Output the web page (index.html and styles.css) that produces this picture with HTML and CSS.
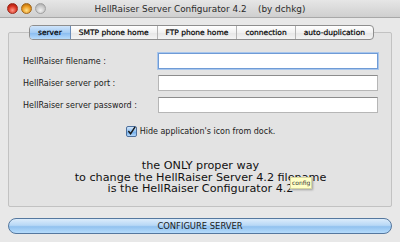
FILE: index.html
```html
<!DOCTYPE html>
<html>
<head>
  <meta charset="UTF-8">
  <title>HellRaiser Server Configurator 4.2</title>
  <link rel="stylesheet" href="styles.css">
</head>
<body>
  <div class="window">
    <!-- Title bar -->
    <div class="titlebar">
      <div class="lights">
        <span class="light red"></span>
        <span class="light orange"></span>
        <span class="light gray"></span>
      </div>
      <span class="title">HellRaiser Server Configurator 4.2&nbsp;&nbsp;&nbsp; (by dchkg)</span>
    </div>
    <div class="content">
      <!-- Tab group -->
      <div class="tabs">
        <span class="tab active">server</span>
        <span class="tab">SMTP phone home</span>
        <span class="tab">FTP phone home</span>
        <span class="tab">connection</span>
        <span class="tab">auto-duplication</span>
      </div>
      <div class="panel">
        <div class="form">
          <label class="label">HellRaiser filename :</label>
          <input class="field focused" type="text">
          <label class="label">HellRaiser server port :</label>
          <input class="field" type="text">
          <label class="label">HellRaiser server password :</label>
          <input class="field" type="password">
        </div>
        <div class="check-row">
          <span class="checkbox">
            <svg width="10" height="10" viewBox="0 0 10 10"><path d="M1.5 5 L4 8 L9 0.5" fill="none" stroke="#1a1a1a" stroke-width="1.6"/></svg>
          </span>
          <span>Hide application's icon from dock.</span>
        </div>
        <div class="message">
          the ONLY proper way<br>
          to change the HellRaiser Server 4.2 filename<br>
          is the HellRaiser Configurator 4.2
          <span class="tooltip">config</span>
        </div>
      </div>
      <button class="configure">CONFIGURE SERVER</button>
    </div>
  </div>
</body>
</html>
```

FILE: styles.css
```css
/* Global */
body {
  margin: 0;
  width: 400px;
  height: 242px;
  overflow: hidden;
  background: #e8e8e8;
  font-family: 'DejaVu Sans', 'Liberation Sans', sans-serif;
  color: #111;
}
.window {
  display: flex;
  flex-direction: column;
  height: 100%;
}
/* Title bar */
.titlebar {
  position: relative;
  height: 17px;
  display: flex;
  align-items: center;
  justify-content: center;
  background: linear-gradient(#e6e6e6, #cfcfcf);
  border-bottom: 1px solid #a8a8a8;
}
.lights {
  position: absolute;
  left: 7px;
  top: 3px;
  display: flex;
  gap: 3px;
}
.light {
  width: 11px;
  height: 11px;
  border-radius: 50%;
  box-sizing: border-box;
}
.light.red {
  background: radial-gradient(circle at 50% 70%, #ff9a8a, #d8321f 55%, #8c1408);
  border: 1px solid #9c2a1c;
}
.light.orange {
  background: radial-gradient(circle at 50% 70%, #ffe08a, #e8961c 55%, #9c5a08);
  border: 1px solid #a0661c;
}
.light.gray {
  background: radial-gradient(circle at 50% 70%, #f0f0f0, #c4c4c4 60%, #9a9a9a);
  border: 1px solid #a0a0a0;
}
.title {
  font-size: 8.9px;
  color: #2a2a2a;
  white-space: pre;
}
/* Content */
.content {
  padding: 7px 8px 0;
  display: flex;
  flex-direction: column;
}
/* Tabs */
.tabs {
  position: relative;
  z-index: 1;
  display: flex;
  align-self: center;
  margin-left: 3px;
  margin-bottom: -8px;
  height: 15px;
  border: 1px solid #8e8e8e;
  border-radius: 4px;
  background: linear-gradient(#ffffff, #f1f1f1 50%, #e6e6e6 51%, #f4f4f4);
  overflow: hidden;
  box-sizing: border-box;
}
.tab {
  display: flex;
  align-items: center;
  font-size: 7.5px;
  color: #000;
  -webkit-text-stroke: 0.2px #000;
  border-left: 1px solid #b4b4b4;
  padding: 0 8px;
}
.tab:first-child {
  border-left: none;
}
.tab.active {
  padding: 0 8px;
  background: linear-gradient(#cfe4fb, #a4ccf3 50%, #86baef 51%, #b8dcfb);
  border-right: 1px solid #6a8cb8;
}
.tab.active + .tab {
  border-left: none;
}
/* Panel */
.panel {
  position: relative;
  height: 175px;
  box-sizing: border-box;
  border: 1px solid #c2c2c2;
  border-radius: 2px;
  background: #e3e3e3;
  padding: 20px 13px 0 14px;
}
.form {
  display: grid;
  grid-template-columns: 135px 220px;
  row-gap: 6px;
  align-items: center;
}
.label {
  font-size: 8px;
  color: #1a1a1a;
}
.field {
  box-sizing: border-box;
  height: 16px;
  margin: 0;
  border: 1px solid #b6b6b6;
  border-top-color: #8c8c8c;
  background: #fff;
  outline: none;
}
.field.focused {
  border-color: #6f9bd6;
  box-shadow: 0 0 0 1px #a8c6ec;
}
/* Checkbox row */
.check-row {
  display: flex;
  justify-content: center;
  align-items: center;
  gap: 3px;
  margin-top: 13px;
  font-size: 8px;
  color: #1a1a1a;
}
.checkbox {
  width: 11px;
  height: 11px;
  box-sizing: border-box;
  border: 1px solid #4d6f9c;
  border-radius: 2px;
  background: linear-gradient(#d2e6fb, #8ebfef 50%, #6aa8e8 51%, #b3d8fb);
  display: flex;
  align-items: flex-end;
  justify-content: flex-end;
}
/* Message */
.message {
  margin-top: 23px;
  text-align: center;
  font-size: 11.2px;
  line-height: 11.5px;
  color: #111;
}
.tooltip {
  position: absolute;
  left: 281px;
  top: 144px;
  padding: 0 1px;
  height: 10px;
  line-height: 10px;
  font-size: 6px;
  color: #333;
  background: #ffffc6;
  border: 1px solid #d6d6a0;
  box-shadow: 1px 1px 2px rgba(0, 0, 0, 0.3);
}
/* Configure button */
.configure {
  margin-top: 11px;
  height: 16px;
  padding: 0;
  border: 1px solid #55789f;
  border-radius: 8px;
  font-family: inherit;
  font-size: 8.4px;
  color: #1a1a1a;
  background: linear-gradient(#dcecfb, #b8d8f6 45%, #92c2ef 55%, #b6dcfc);
}
```
